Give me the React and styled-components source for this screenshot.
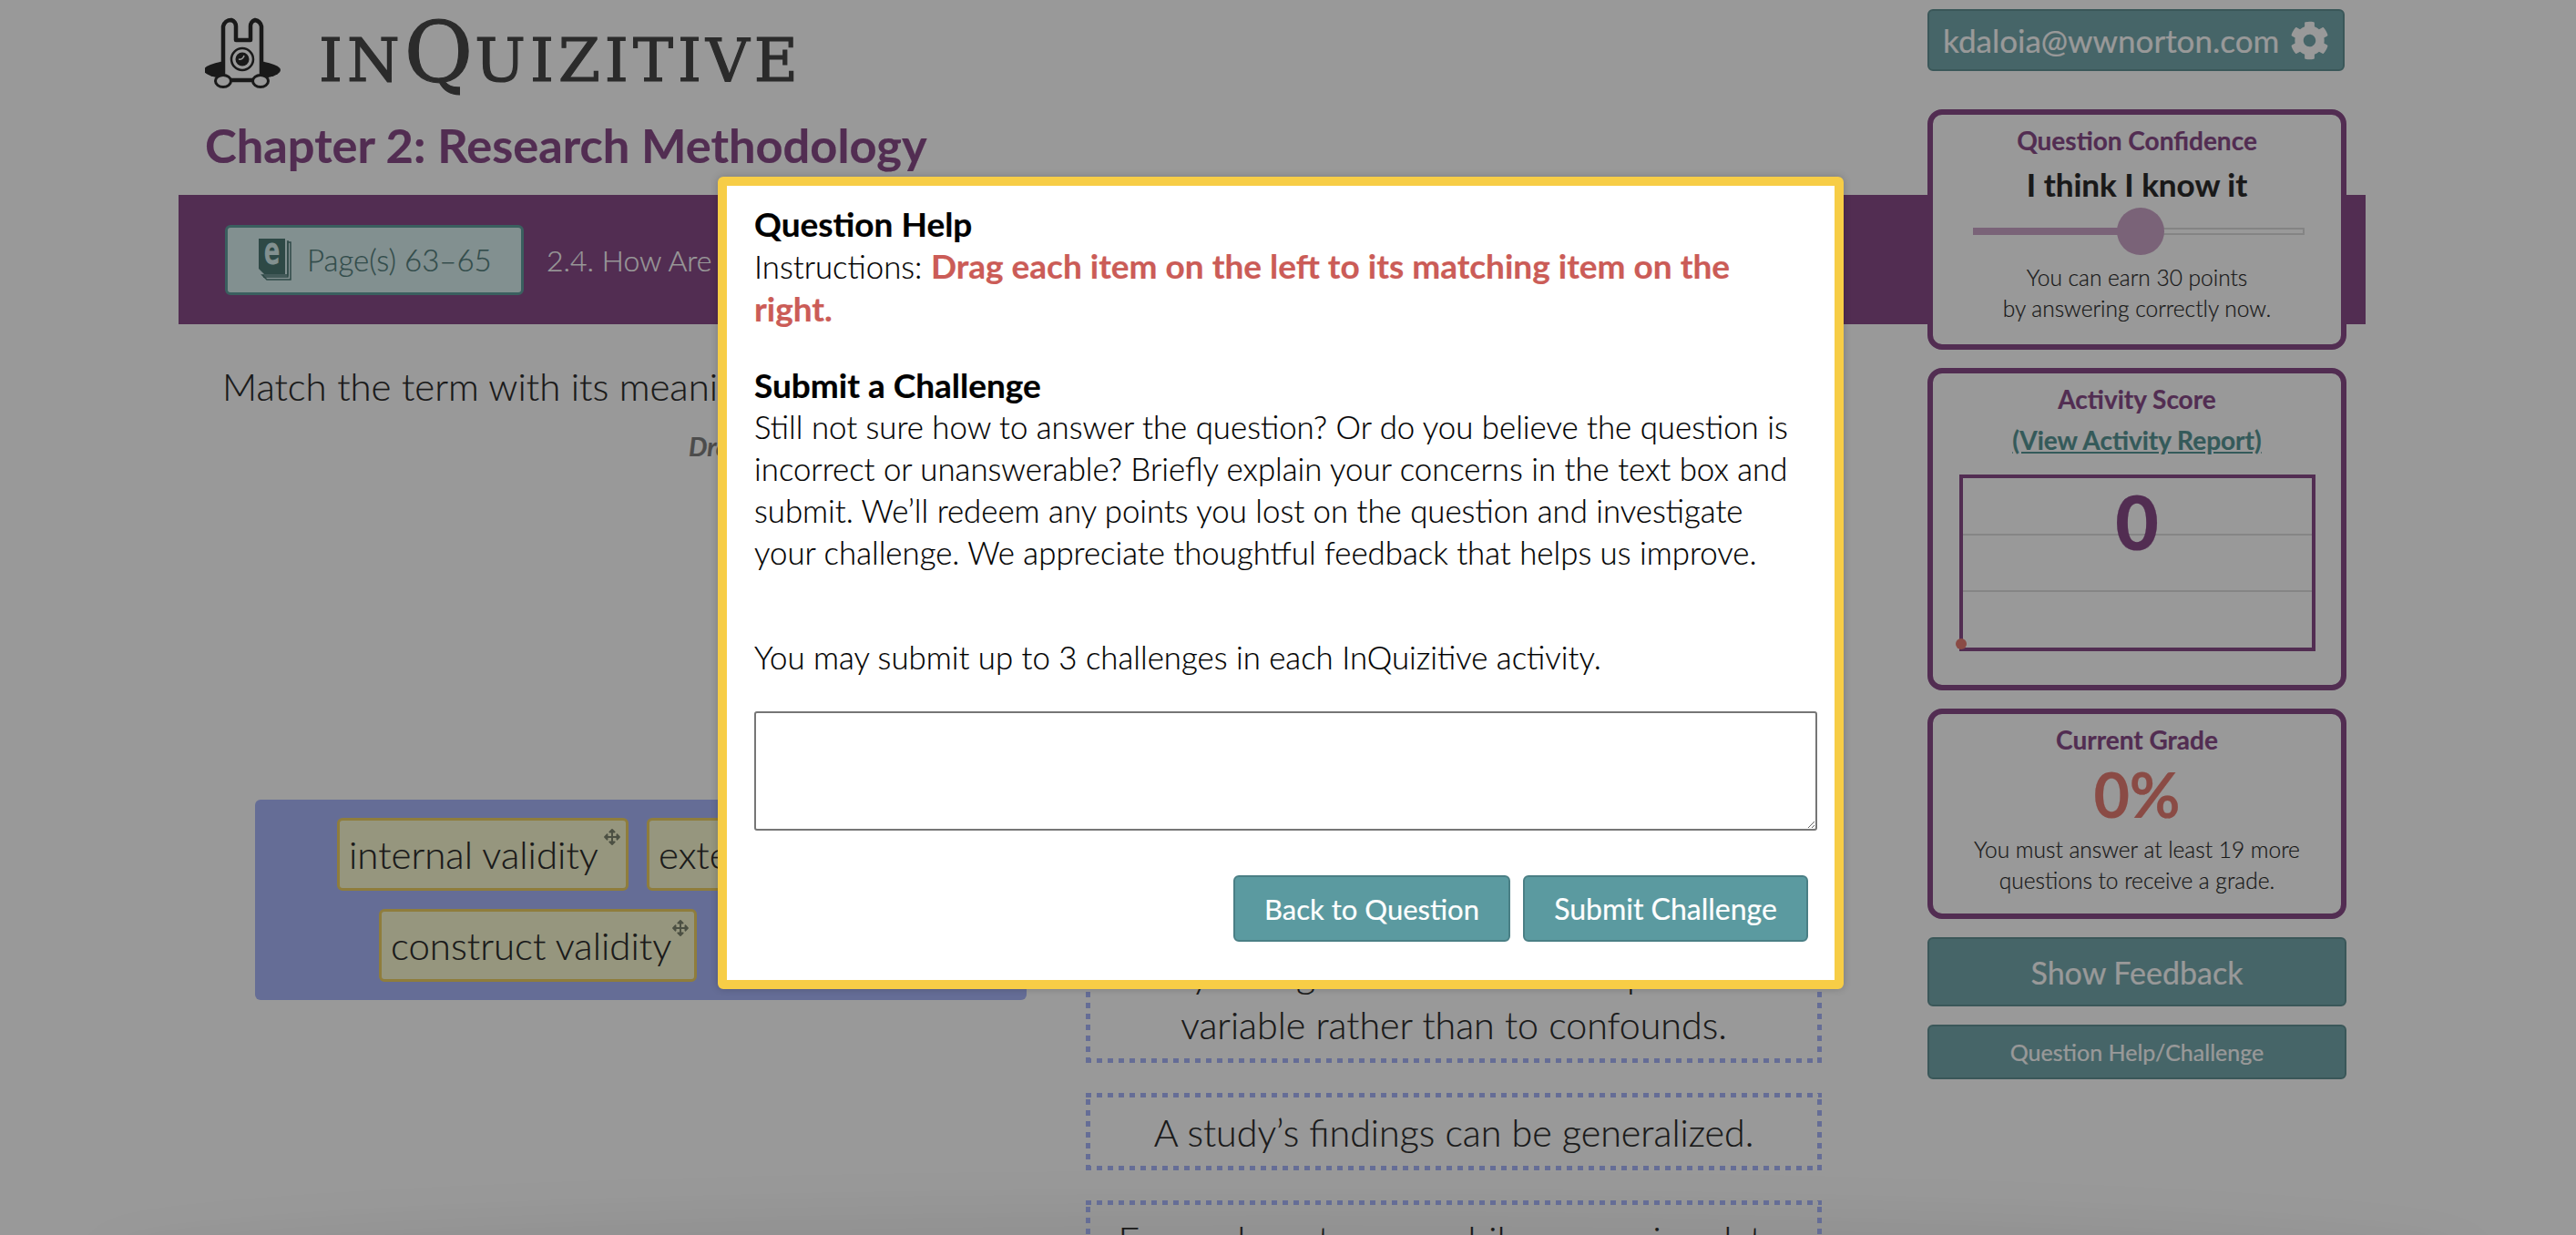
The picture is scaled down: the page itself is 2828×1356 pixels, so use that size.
import React from 'react';
import styled, {createGlobalStyle} from 'styled-components';
import {FaCog, FaArrowsAlt} from 'react-icons/fa';

const GlobalStyle = createGlobalStyle`
  html, body {
    margin: 0;
    padding: 0;
    background: #fff;
  }
  body {
    font-family: "Lato", "Noto Sans", sans-serif;
    font-weight: 300;
    color: #2b2b2b;
    -webkit-text-stroke: 0.2px currentColor;
  }
`;

const Screen = styled.div`
  position: relative;
  width: 2828px;
  height: 1356px;
  overflow: hidden;
  background: #fff;
`;

const FooterShade = styled.div`
  position: absolute;
  left: 110px;
  right: 110px;
  top: 1325px;
  height: 120px;
  border-radius: 50%;
  background: rgba(0, 0, 0, 0.05);
  filter: blur(24px);
`;

const Page = styled.div`
  position: relative;
  display: grid;
  grid-template-columns: 1fr 481px;
  grid-template-rows: 214px 142px 1fr;
  width: 2401px;
  height: 1356px;
  margin-left: 196px;
`;

const Header = styled.header`
  grid-column: 1;
  grid-row: 1;
  padding-left: 29px;
`;

const LogoRow = styled.div`
  display: flex;
  align-items: flex-start;
  gap: 41px;
  height: 127px;
  padding-top: 18px;
  box-sizing: border-box;
`;

const Wordmark = styled.div`
  font-family: "DejaVu Serif", serif;
  font-weight: 400;
  font-size: 66px;
  line-height: 80px;
  letter-spacing: 5px;
  color: #484848;
  -webkit-text-stroke: 1.2px #484848;
  span {
    font-size: 92px;
    letter-spacing: 2px;
  }
`;

const Chapter = styled.h1`
  margin: 0;
  font-size: 52.4px;
  line-height: 64px;
  font-weight: 700;
  color: #894b89;
`;

const Band = styled.div`
  grid-column: 1 / -1;
  grid-row: 2;
  display: flex;
  align-items: center;
  gap: 25px;
  padding: 0 51px;
  background: #894b89;
`;

const PagesButton = styled.button`
  display: flex;
  align-items: center;
  gap: 17px;
  width: 328px;
  height: 77px;
  padding: 0 0 0 33px;
  box-sizing: border-box;
  background: #d9f0f0;
  border: 3px solid #619e9e;
  border-radius: 6px;
  font: inherit;
  font-size: 33px;
  color: #547f7d;
`;

const Section = styled.span`
  font-size: 32px;
  color: #fff;
`;

const Main = styled.main`
  grid-column: 1;
  grid-row: 3;
`;

const Prompt = styled.p`
  margin: 40px 0 0 48px;
  font-size: 42px;
  line-height: 56px;
  color: #2b2b2b;
`;

const Direction = styled.p`
  margin: 20px 0 0 560px;
  font-size: 29px;
  line-height: 36px;
  font-weight: 700;
  font-style: italic;
  color: #7f7f7f;
`;

const MatchArea = styled.div`
  display: grid;
  grid-template-columns: 847px 808px;
  column-gap: 65px;
  align-items: start;
  padding-left: 84px;
`;

const Bank = styled.div`
  display: flex;
  flex-direction: column;
  gap: 20px;
  height: 220px;
  margin-top: 370px;
  padding-top: 20px;
  box-sizing: border-box;
  background: #a9b6fa;
  border-radius: 6px;
`;

const BankRow = styled.div`
  display: flex;
  justify-content: center;
  gap: ${({gap}) => gap}px;
`;

const Tag = styled.div`
  position: relative;
  display: flex;
  align-items: center;
  width: ${({width}) => width}px;
  height: 80px;
  padding-left: 10px;
  box-sizing: border-box;
  background: #fafad2;
  border: 3px solid #eed064;
  border-radius: 6px;
  font-size: 42px;
  white-space: nowrap;
  color: #2b2b2b;
`;

const MoveIcon = styled(FaArrowsAlt)`
  position: absolute;
  top: 9px;
  right: 6px;
  width: 18px;
  height: 18px;
  color: #7f8670;
`;

const Targets = styled.div`
  display: flex;
  flex-direction: column;
  gap: 33px;
  margin-top: 518px;
`;

const Target = styled.div`
  padding: 14.5px 15px;
  box-sizing: border-box;
  background:
    repeating-linear-gradient(90deg, #a9b6fa 0 6px, transparent 6px 12px) top / 100% 5px no-repeat,
    repeating-linear-gradient(90deg, #a9b6fa 0 6px, transparent 6px 12px) bottom / 100% 5px no-repeat,
    repeating-linear-gradient(0deg, #a9b6fa 0 6px, transparent 6px 12px) left / 5px 100% no-repeat,
    repeating-linear-gradient(0deg, #a9b6fa 0 6px, transparent 6px 12px) right / 5px 100% no-repeat;
  font-size: 41.2px;
  line-height: 56px;
  text-align: center;
  color: #2b2b2b;
`;

const Sidebar = styled.aside`
  grid-column: 2;
  grid-row: 1 / -1;
  z-index: 1;
  display: flex;
  flex-direction: column;
  gap: 20px;
  padding-top: 10px;
  width: 460px;
  box-sizing: border-box;
`;

const UserButton = styled.div`
  display: flex;
  align-items: center;
  justify-content: space-between;
  width: 458px;
  height: 68px;
  margin-bottom: 22px;
  padding: 0 15px;
  box-sizing: border-box;
  background: #75a9ad;
  border: 2px solid #619194;
  border-radius: 6px;
  font-size: 35px;
  font-weight: 400;
  color: #fff;
  svg {
    width: 43px;
    height: 43px;
  }
`;

const Card = styled.section`
  height: ${({h}) => h}px;
  padding-top: 10px;
  box-sizing: border-box;
  background: #fff;
  border: 6px solid #894b89;
  border-radius: 16px;
  text-align: center;
`;

const CardTitle = styled.h2`
  margin: 0;
  font-size: 28px;
  line-height: 36px;
  font-weight: 700;
  color: #894b89;
`;

const Confidence = styled.div`
  margin-top: 7px;
  font-size: 35px;
  line-height: 46px;
  font-weight: 700;
  color: #2b2b2b;
`;

const Slider = styled.div`
  position: relative;
  width: 364px;
  height: 8px;
  margin: 25px 0 0 44px;
  box-sizing: border-box;
  background: #fff;
  border: 2px solid #dcdcdc;
`;

const SliderFill = styled.div`
  position: absolute;
  left: -2px;
  top: -2px;
  height: 8px;
  background: #cca5c8;
`;

const SliderThumb = styled.div`
  position: absolute;
  top: -24px;
  width: 52px;
  height: 52px;
  margin-left: -26px;
  border-radius: 50%;
  background: #cca5c8;
`;

const Note = styled.p`
  margin: ${({top}) => top}px 0 0;
  font-size: 24.5px;
  line-height: 34px;
  color: #2b2b2b;
`;

const ReportLink = styled.a`
  display: block;
  margin-top: 9px;
  font-size: 28px;
  line-height: 36px;
  font-weight: 700;
  color: #589696;
  text-decoration: underline;
`;

const Chart = styled.div`
  position: relative;
  width: 391px;
  height: 194px;
  margin: 20px auto 0;
  box-sizing: border-box;
  border: 4px solid #894b89;
  display: grid;
  grid-template-rows: 63px 62px 1fr;
`;

const ChartRow = styled.div`
  border-bottom: ${({line}) => (line ? '2px solid #dedede' : 'none')};
`;

const ChartScore = styled.div`
  position: absolute;
  top: -1px;
  left: 0;
  right: 0;
  font-size: 82px;
  line-height: 96px;
  font-weight: 900;
  color: #894b89;
`;

const ChartDot = styled.div`
  position: absolute;
  left: -8px;
  bottom: -2px;
  width: 12px;
  height: 12px;
  border-radius: 50%;
  background: #e67d73;
`;

const Grade = styled.div`
  margin-top: 5px;
  font-size: 68px;
  line-height: 74px;
  font-weight: 700;
  color: #e67d73;
`;

const SideButton = styled.button`
  display: block;
  width: 100%;
  height: ${({h}) => h}px;
  background: #75a9ad;
  border: 2px solid #619194;
  border-radius: 6px;
  font: inherit;
  font-weight: 400;
  font-size: ${({size}) => size}px;
  color: #fff;
`;

const Overlay = styled.div`
  position: absolute;
  inset: 0;
  z-index: 2;
  background: rgba(0, 0, 0, 0.4);
`;

const Modal = styled.div`
  position: absolute;
  z-index: 3;
  left: 788px;
  top: 194px;
  width: 1236px;
  height: 892px;
  padding: 19px 19px 0 30px;
  box-sizing: border-box;
  background: #fff;
  border: 10px solid #f7cd46;
  border-radius: 6px;
  box-shadow: 0 0 8px rgba(0, 0, 0, 0.2);
  color: #000;
  font-size: 34.8px;
  line-height: 46px;
`;

const ModalHeading = styled.h3`
  margin: ${({top}) => top || 0}px 0 0;
  font-size: 37px;
  line-height: 46px;
  font-weight: 700;
`;

const ModalText = styled.p`
  margin: ${({top}) => top || 0}px 0 0;
  white-space: nowrap;
`;

const Warning = styled.strong`
  font-size: 37px;
  font-weight: 700;
  color: #cb5c57;
`;

const ChallengeBox = styled.textarea`
  display: block;
  width: 1167px;
  height: 131px;
  margin: 36px 0 0;
  box-sizing: border-box;
  background: #fff;
  border: 2px solid #767676;
  border-radius: 3px;
`;

const ModalActions = styled.div`
  display: flex;
  justify-content: flex-end;
  gap: 14px;
  margin-top: 49px;
  padding-right: 10px;
`;

const ModalButton = styled.button`
  width: ${({width}) => width}px;
  height: 73px;
  padding: 0;
  background: #5b9aa0;
  border: 2px solid #4a7f85;
  border-radius: 6px;
  font: inherit;
  font-size: ${({size}) => size}px;
  font-weight: 400;
  color: #fff;
`;

const Logo = () => (
  <svg width="84" height="82" viewBox="10 8 84 82">
    <ellipse cx="51" cy="67" rx="42" ry="11" fill="#2b2b2b" />
    <path d="M30 78V19a9 9 0 0 1 9-7 7 7 0 0 1 5 7V34H60V19a7 7 0 0 1 5-7 9 9 0 0 1 7 7V78Z" fill="#fff" stroke="#2b2b2b" strokeWidth="4.5" strokeLinejoin="round" />
    <circle cx="51" cy="55" r="12" fill="#fff" stroke="#2b2b2b" strokeWidth="2.5" />
    <circle cx="51" cy="55" r="7.5" fill="#2b2b2b" />
    <path d="M47 55a5 5 0 0 0 6-4 5 5 0 0 1-6 4Z" fill="#fff" stroke="#fff" strokeWidth="1.5" />
    <ellipse cx="30" cy="79" rx="8.5" ry="6.5" fill="#fff" stroke="#2b2b2b" strokeWidth="3" />
    <ellipse cx="71" cy="79" rx="8.5" ry="6.5" fill="#fff" stroke="#2b2b2b" strokeWidth="3" />
  </svg>
);

const BookIcon = () => (
  <svg width="37" height="46" viewBox="0 0 37 46">
    <path d="M33 4H36V45H10L5 40H33Z" fill="#d9f0f0" stroke="#4e7a76" strokeWidth="1.5" />
    <path d="M33 2V42H6" fill="none" stroke="#4e7a76" strokeWidth="1.5" />
    <path d="M1 0H30V39H7L1 33Z" fill="#4e7a76" />
    <text transform="translate(15.5 28) scale(0.62 1)" textAnchor="middle" fontFamily="DejaVu Sans" fontWeight="700" fontSize="42" fill="#d9f0f0">e</text>
  </svg>
);

const App = () => (
  <Screen>
    <GlobalStyle />
    <FooterShade />
    <Page>
      <Header>
        <LogoRow>
          <Logo />
          <Wordmark>IN<span>Q</span>UIZITIVE</Wordmark>
        </LogoRow>
        <Chapter>Chapter 2: Research Methodology</Chapter>
      </Header>
      <Band>
        <PagesButton><BookIcon />Page(s) 63–65</PagesButton>
        <Section>2.4. How Are Research Studies Evaluated?</Section>
      </Band>
      <Main>
        <Prompt>Match the term with its meaning.</Prompt>
        <Direction>Drag each item on the left to its matching item on the right.</Direction>
        <MatchArea>
          <Bank>
            <BankRow gap={20}>
              <Tag width={320}>internal validity<MoveIcon /></Tag>
              <Tag width={327}>external validity<MoveIcon /></Tag>
            </BankRow>
            <BankRow gap={26}>
              <Tag width={349}>construct validity<MoveIcon /></Tag>
              <Tag width={200}>reliability<MoveIcon /></Tag>
            </BankRow>
          </Bank>
          <Targets>
            <Target>Any change is due to the independent variable rather than to confounds.</Target>
            <Target>A study’s findings can be generalized.</Target>
            <Target>Errors do not occur while measuring data.</Target>
          </Targets>
        </MatchArea>
      </Main>
      <Sidebar>
        <UserButton>kdaloia@wwnorton.com<FaCog /></UserButton>
        <Card h={264}>
          <CardTitle>Question Confidence</CardTitle>
          <Confidence>I think I know it</Confidence>
          <Slider>
            <SliderFill style={{width: '51%'}} />
            <SliderThumb style={{left: '50.5%'}} />
          </Slider>
          <Note top={30}>You can earn 30 points<br />by answering correctly now.</Note>
        </Card>
        <Card h={354}>
          <CardTitle>Activity Score</CardTitle>
          <ReportLink>(View Activity Report)</ReportLink>
          <Chart>
            <ChartRow line />
            <ChartRow line />
            <ChartRow />
            <ChartScore>0</ChartScore>
            <ChartDot />
          </Chart>
        </Card>
        <Card h={231}>
          <CardTitle>Current Grade</CardTitle>
          <Grade>0%</Grade>
          <Note top={7}>You must answer at least 19 more<br />questions to receive a grade.</Note>
        </Card>
        <SideButton h={76} size={34}>Show Feedback</SideButton>
        <SideButton h={60} size={25}>Question Help/Challenge</SideButton>
      </Sidebar>
    </Page>
    <Overlay />
    <Modal>
      <ModalHeading>Question Help</ModalHeading>
      <ModalText>Instructions: <Warning>Drag each item on the left to its matching item on the<br />right.</Warning></ModalText>
      <ModalHeading top={37}>Submit a Challenge</ModalHeading>
      <ModalText>
        Still not sure how to answer the question? Or do you believe the question is<br />
        incorrect or unanswerable? Briefly explain your concerns in the text box and<br />
        submit. We’ll redeem any points you lost on the question and investigate<br />
        your challenge. We appreciate thoughtful feedback that helps us improve.
      </ModalText>
      <ModalText top={69}>You may submit up to 3 challenges in each InQuizitive activity.</ModalText>
      <ChallengeBox />
      <ModalActions>
        <ModalButton width={304} size={31}>Back to Question</ModalButton>
        <ModalButton width={313} size={32}>Submit Challenge</ModalButton>
      </ModalActions>
    </Modal>
  </Screen>
);

export default App;
